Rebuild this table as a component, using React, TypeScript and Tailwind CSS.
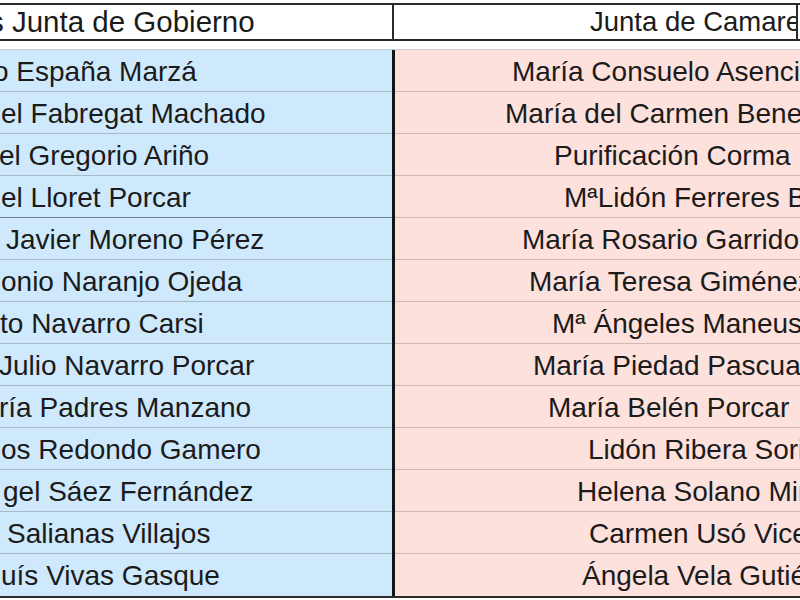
import React from 'react';

const rows = [
  { gob: 'o España Marzá', gobX: -7, cam: 'María Consuelo Asencio', camX: 117 },
  { gob: 'el Fabregat Machado', gobX: 1, cam: 'María del Carmen Benedito', camX: 110 },
  { gob: 'el Gregorio Ariño', gobX: -1, cam: 'Purificación Corma', camX: 159 },
  { gob: 'el Lloret Porcar', gobX: 1, cam: 'MªLidón Ferreres Bou', camX: 169, dark: true },
  { gob: 'Javier Moreno Pérez', gobX: 6, cam: 'María Rosario Garrido', camX: 127 },
  { gob: 'onio Naranjo Ojeda', gobX: 1, cam: 'María Teresa Giménez', camX: 134 },
  { gob: 'to Navarro Carsi', gobX: 0, cam: 'Mª Ángeles Maneus', camX: 157 },
  { gob: 'Julio Navarro Porcar', gobX: -1, cam: 'María Piedad Pascual', camX: 138 },
  { gob: 'ría Padres Manzano', gobX: -1, cam: 'María Belén Porcar', camX: 153 },
  { gob: 'os Redondo Gamero', gobX: 1, cam: 'Lidón Ribera Soriano', camX: 193 },
  { gob: 'gel Sáez Fernández', gobX: 3, cam: 'Helena Solano Miralles', camX: 182 },
  { gob: 'Salianas Villajos', gobX: 7, cam: 'Carmen Usó Vicent', camX: 194 },
  { gob: 'uís Vivas Gasque', gobX: 1, cam: 'Ángela Vela Gutiérrez', camX: 187 },
];

export default function App() {
  return (
    <div
      className="w-[800px] h-[600px] overflow-hidden bg-white text-[#1b1b1b] text-[28px] leading-none"
      style={{ fontFamily: '"Liberation Sans", Arial, sans-serif' }}
    >
      {/* Header */}
      <div className="mt-[3px] flex h-[38px] border-y-2 border-[#2a2a2a]">
        <div className="w-[392px] shrink-0 flex items-center whitespace-nowrap overflow-hidden text-[29.5px]">
          <span className="-ml-[11px]">s Junta de Gobierno</span>
        </div>
        <div className="w-[2px] shrink-0 bg-[#2a2a2a]" />
        <div className="flex-1 min-w-0 flex items-center whitespace-nowrap overflow-hidden pl-[196px] border-r-2 border-[#2a2a2a] mr-[2px] text-[27.5px]">
          Junta de Camareras
        </div>
      </div>

      {/* Body */}
      <div className="mt-[8px] flex border-t border-[#c9cfd4] border-b-2 border-b-[#2a2a2a]">
        <div className="w-[392px] shrink-0 bg-[#cfe9fc]">
          {rows.map((r, i) => (
            <div
              key={i}
              className={`h-[42px] pt-[3px] flex items-center whitespace-nowrap overflow-hidden border-b ${
                i === rows.length - 1 ? 'border-transparent' : r.dark ? 'border-[#6f8392]' : 'border-[#a8b9c6]'
              }`}
            >
              <span style={{ marginLeft: r.gobX }}>{r.gob}</span>
            </div>
          ))}
        </div>
        <div className="w-[3px] shrink-0 bg-[#151515]" />
        <div className="flex-1 min-w-0 bg-[#fde1dd]">
          {rows.map((r, i) => (
            <div
              key={i}
              className={`h-[42px] pt-[3px] flex items-center whitespace-nowrap overflow-hidden border-b ${
                i === rows.length - 1 ? 'border-transparent' : 'border-[#cdb8b5]'
              }`}
            >
              <span style={{ marginLeft: r.camX }}>{r.cam}</span>
            </div>
          ))}
        </div>
      </div>
    </div>
  );
}
